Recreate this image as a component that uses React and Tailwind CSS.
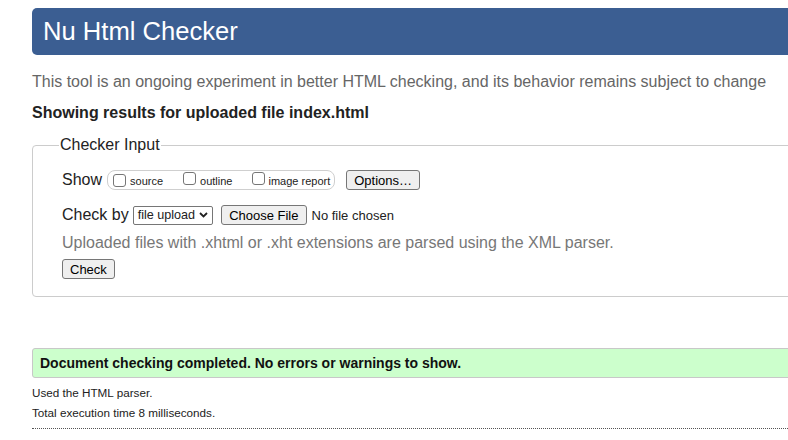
import React from "react";

function Checkbox() {
  return (
    <span className="inline-block w-[13px] h-[13px] border border-[#767676] rounded-[3px] bg-white shrink-0" />
  );
}

function Btn({ children, className = "" }) {
  return (
    <span
      className={
        "inline-flex items-center h-[20px] px-[7px] bg-[#efefef] border border-[#767676] rounded-[3px] text-[13px] text-black leading-none " +
        className
      }
    >
      {children}
    </span>
  );
}

export default function App() {
  return (
    <div className="w-[788px] h-[440px] overflow-hidden bg-white font-['Liberation_Sans',Arial,sans-serif] text-[#222]">
      <div className="w-[900px] pl-[32px] pt-[8px]">
        <div className="h-[47px] bg-[#3b5e92] rounded-[5px] flex items-center pl-[11px]">
          <h1 className="text-white text-[25.6px] leading-none">Nu Html Checker</h1>
        </div>

        <p className="mt-[17px] text-[16px] leading-[20px] text-[#666]">
          This tool is an ongoing experiment in better HTML checking, and its behavior remains subject to change
        </p>

        <p className="mt-[11px] text-[16px] leading-[20px] font-bold text-[#222]">
          Showing results for uploaded file index.html
        </p>

        <fieldset className="mt-[12px] w-[820px] border border-[#cccccc] rounded-[4px] pl-[29px] pb-[17px]">
          <legend className="ml-[-3px] px-[1px] text-[16px] leading-[20px] text-[#222]">Checker Input</legend>

          <div className="mt-[15px] flex items-center h-[20px]">
            <span className="text-[16px] leading-[20px]">Show</span>
            <span className="ml-[5px] flex items-center h-[20px] border border-[#cfcfcf] rounded-[8px] pl-[5px] pr-[4px]">
              <Checkbox />
              <span className="ml-[4px] mt-[3px] text-[11px] leading-none">source</span>
              <span className="ml-[20px]"><Checkbox /></span>
              <span className="ml-[4px] mt-[3px] text-[11px] leading-none">outline</span>
              <span className="ml-[20px]"><Checkbox /></span>
              <span className="ml-[3px] mt-[3px] text-[11px] leading-none">image report</span>
            </span>
            <Btn className="ml-[11px]">Options…</Btn>
          </div>

          <div className="mt-[15px] flex items-center h-[20px]">
            <span className="text-[16px] leading-[20px]">Check by</span>
            <span className="ml-[4px] flex items-center h-[19px] border border-[#767676] rounded-[2px] bg-white pl-[4px] pr-[4px]">
              <span className="text-[12.6px] leading-none">file upload</span>
              <svg className="ml-[4px]" width="9" height="6" viewBox="0 0 9 6">
                <path d="M1 1 L4.5 4.5 L8 1" fill="none" stroke="#222" strokeWidth="1.8" />
              </svg>
            </span>
            <Btn className="ml-[8px]">Choose File</Btn>
            <span className="ml-[5px] text-[13px] leading-none">No file chosen</span>
          </div>

          <p className="mt-[8px] text-[16px] leading-[20px] text-[#777]">
            Uploaded files with .xhtml or .xht extensions are parsed using the XML parser.
          </p>

          <div className="mt-[6px] flex">
            <Btn>Check</Btn>
          </div>
        </fieldset>

        <div className="mt-[51px] h-[30px] bg-[#ccffcc] border border-[#c8c8c8] rounded-[3px] flex items-center pl-[7px]">
          <span className="text-[14px] font-bold text-[#111] leading-none">
            Document checking completed. No errors or warnings to show.
          </span>
        </div>

        <p className="mt-[5px] text-[11.7px] leading-[20px] text-[#222]">Used the HTML parser.</p>
        <p className="text-[11.7px] leading-[20px] text-[#222]">Total execution time 8 milliseconds.</p>
        <div className="mt-[5px] border-b border-dotted border-[#555]" />
      </div>
    </div>
  );
}
